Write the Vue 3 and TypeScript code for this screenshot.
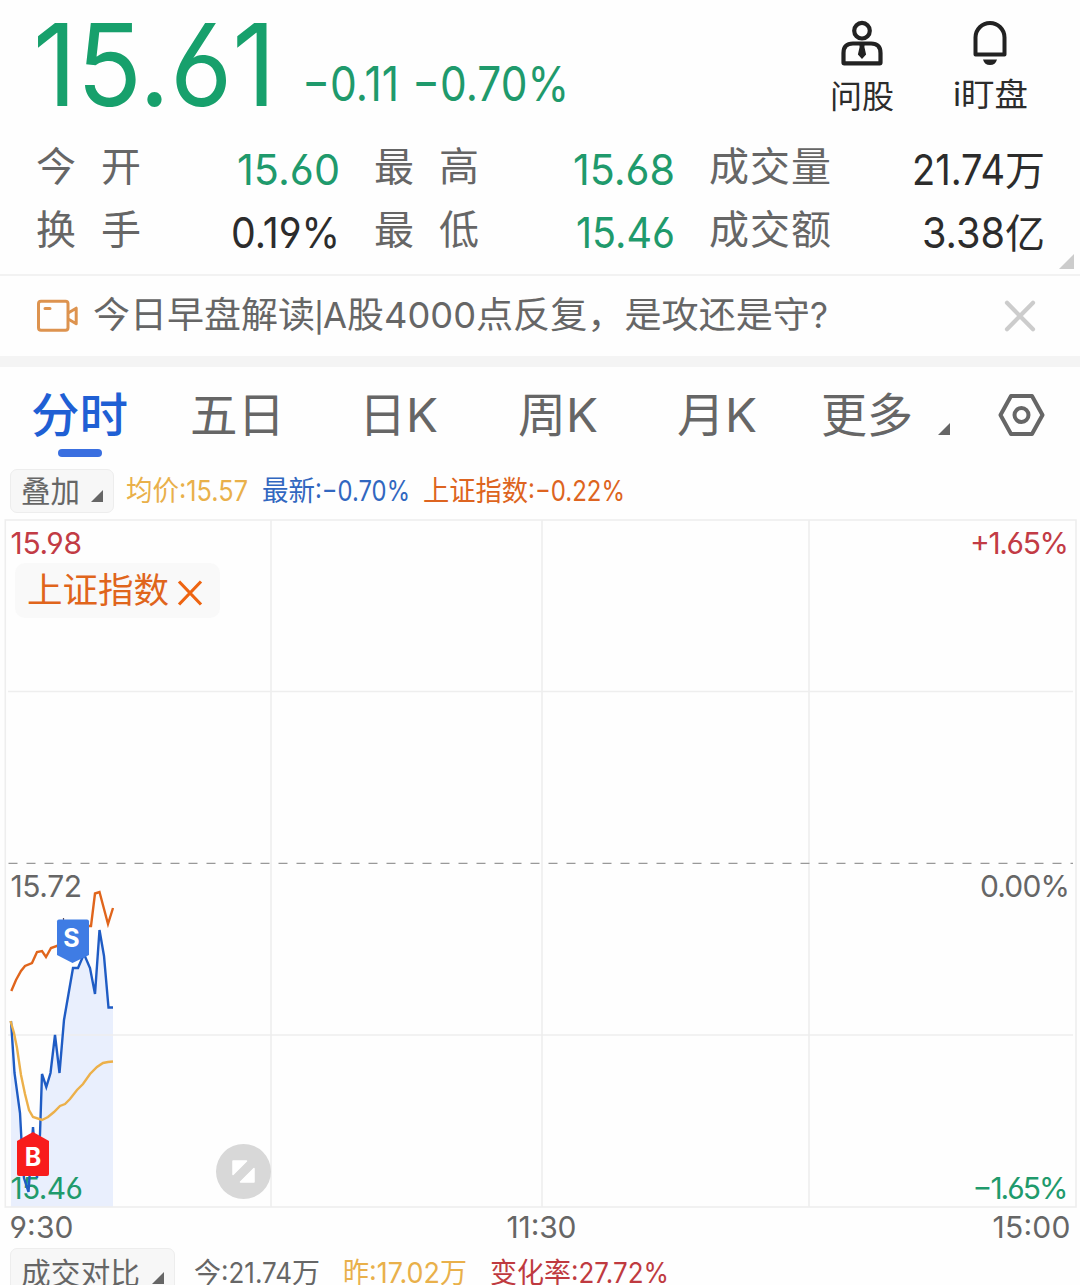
<script setup lang="ts">
interface Stat {
  label: string
  wide?: boolean
  value: string
  width: number
  unit?: string
  tone: 'down' | 'plain'
}

interface Run {
  text: string
  width: number
}

interface Point {
  x: number
  y: number
}

// Condenses a run of text horizontally so that it takes up the given width.
const vFit = {
  mounted(el: HTMLElement, binding: { value: number }) {
    const natural = el.getBoundingClientRect().width
    el.style.marginRight = `${binding.value - natural}px`
    el.style.transform = `scaleX(${binding.value / natural})`
  },
}

const stats: Stat[] = [
  { label: '今开', wide: true, value: '15.60', width: 103, tone: 'down' },
  { label: '最高', wide: true, value: '15.68', width: 102, tone: 'down' },
  { label: '成交量', value: '21.74', width: 93, unit: '万', tone: 'plain' },
  { label: '换手', wide: true, value: '0.19%', width: 109, tone: 'plain' },
  { label: '最低', wide: true, value: '15.46', width: 99, tone: 'down' },
  { label: '成交额', value: '3.38', width: 83, unit: '亿', tone: 'plain' },
]

const headline: Run[] = [
  { text: '今日早盘解读', width: 222 },
  { text: '|', width: 8 },
  { text: 'A', width: 24 },
  { text: '股', width: 37 },
  { text: '4000', width: 92 },
  { text: '点反复，是攻还是守', width: 334 },
  { text: '?', width: 18 },
]

const tabs: { runs: Run[]; left: number }[] = [
  { runs: [{ text: '五日', width: 95 }], left: 190 },
  { runs: [{ text: '日', width: 47 }, { text: 'K', width: 32 }], left: 359 },
  { runs: [{ text: '周', width: 48 }, { text: 'K', width: 32 }], left: 518 },
  { runs: [{ text: '月', width: 48 }, { text: 'K', width: 32 }], left: 677 },
  { runs: [{ text: '更多', width: 92 }], left: 821 },
]

const legend: { tone: string; runs: Run[] }[] = [
  { tone: 'average', runs: [{ text: '均价', width: 53 }, { text: ':15.57', width: 69 }] },
  { tone: 'latest', runs: [{ text: '最新', width: 53 }, { text: ':−0.70%', width: 95 }] },
  { tone: 'index', runs: [{ text: '上证指数', width: 105 }, { text: ':−0.22%', width: 97 }] },
]

const volume: { tone: string; runs: Run[] }[] = [
  { tone: 'today', runs: [{ text: '今', width: 27 }, { text: ':21.74', width: 71 }, { text: '万', width: 28 }] },
  { tone: 'average', runs: [{ text: '昨', width: 26 }, { text: ':17.02', width: 71 }, { text: '万', width: 27 }] },
  { tone: 'rise', runs: [{ text: '变化率', width: 81 }, { text: ':27.72%', width: 98 }] },
]

const parse = (s: string): Point[] =>
  s.split(' ').map((p) => {
    const [x, y] = p.split(',').map(Number)
    return { x, y }
  })
const toLine = (pts: Point[]) => pts.map((p) => `${p.x},${p.y}`).join(' ')

const price = parse(
  '11,1021 14.5,1073 20,1113 22,1150 24,1178 28.5,1192 30,1170 33,1127 37,1178 40,1134 42,1074 46.3,1087 50.5,1073 55,1035 59.5,1073 64,1020 73,968 78,968 84,954 90,968 95,994 99.5,930 104,956 108.5,1007.5 113,1007.5',
)
const average = parse(
  '10.5,1021 14,1033 17,1048 21,1075 25,1094 29,1110 33,1117 42,1120 48,1117 54,1112 60,1106 65,1104 70,1099 77,1090 83,1084 90,1074 97,1067 103,1063 108,1062 113,1061.5',
)
const index = parse(
  '11.3,991 16,980 21,971 25,966 32,963 37,952 42,951 46,957 51,948 57,946 64,938 70,932 88,926 91,926 95,893.5 99.5,892 108,924 113,908',
)
const area = `11,1207 ${toLine(price)} 113,1207`
</script>

<template>
  <main class="page">
    <header class="quote">
      <div class="last"><span v-fit="243">15.61</span></div>
      <div class="change">
        <span v-fit="97">−0.11</span>
        <span v-fit="157">−0.70%</span>
      </div>
      <button class="action ask">
        <svg width="46" height="50" viewBox="839 18 46 50" fill="none" stroke="#222" stroke-width="4.200">
          <circle cx="862" cy="30.700" r="7.800" />
          <path d="M843.500 62.500V53q0-9.500 9.500-9.500h18q9.500 0 9.500 9.500v9.500q0 .8-.8.8h-35.400q-.8 0-.8-.8Z" stroke-linejoin="round" />
          <path d="M859.300 44h5.400l-.3 3 1.700 7.500-4.100 4.500-4.100-4.500 1.700-7.500Z" fill="#222" stroke="none" />
        </svg>
        <span v-fit="64">问股</span>
      </button>
      <button class="action watch">
        <svg width="46" height="50" viewBox="968.500 18 46 50" fill="none" stroke="#222" stroke-width="4">
          <path d="M977 54.500V37.500a14.500 14.500 0 0 1 29 0v17Z" stroke-linejoin="round" />
          <path d="M984.500 59.500h14q-1.500 5.500-7 5.500t-7-5.500Z" fill="#222" stroke="none" />
        </svg>
        <span v-fit="75">i盯盘</span>
      </button>
    </header>

    <section class="stats">
      <div v-for="s in stats" :key="s.label" class="stat">
        <span class="label" :class="{ wide: s.wide }">{{ s.label }}</span>
        <span class="value" :class="s.tone">
          <span v-fit="s.width">{{ s.value }}</span><span v-if="s.unit" class="unit">{{ s.unit }}</span>
        </span>
      </div>
      <i class="corner"></i>
    </section>

    <section class="news">
      <svg width="44" height="34" viewBox="36 299 44 34" fill="none" stroke="#dd934f" stroke-width="3" stroke-linejoin="round" stroke-linecap="round">
        <rect x="38.500" y="301.300" width="29.500" height="29" rx="2.500" />
        <path d="M45 308.500h5M69 312.500l7.200-4.300v15.500l-7.200-4.200" />
      </svg>
      <p><span v-for="r in headline" :key="r.text" v-fit="r.width" :class="{ bar: r.text === '|' }">{{ r.text }}</span></p>
      <svg class="close" width="34" height="34" viewBox="-17 -17 34 34" stroke="#ccc" stroke-width="4.200" stroke-linecap="round">
        <path d="M-13-13.200L13 13.200M13-13.200L-13 13.200" />
      </svg>
    </section>

    <nav class="tabs">
      <a class="tab active"><span v-fit="97">分时</span></a>
      <a v-for="t in tabs" :key="t.left" class="tab">
        <span v-for="r in t.runs" :key="r.text" v-fit="r.width">{{ r.text }}</span>
      </a>
      <i class="tri"></i>
      <svg width="48" height="44" viewBox="998 393 48 44" fill="none" stroke="#666" stroke-width="4">
        <path d="M1011 396h21l10.500 19-10.500 19h-21l-10.500-19Z" stroke-linejoin="round" />
        <circle cx="1021.500" cy="415" r="7" />
      </svg>
    </nav>

    <section class="legend">
      <button class="chip"><span v-fit="59">叠加</span><i class="tri"></i></button>
      <span v-for="l in legend" :key="l.tone" class="item" :class="l.tone">
        <span v-for="r in l.runs" :key="r.text" v-fit="r.width">{{ r.text }}</span>
      </span>
    </section>

    <section class="chart">
      <svg width="1080" height="732" viewBox="0 516 1080 732">
        <polygon :points="area" fill="#e9effd" />
        <g class="grid">
          <rect x="5.300" y="520" width="1070.700" height="687" />
          <path d="M271 520V1207M542 520V1207M809 520V1207M8 691.500H1073M8 1035H1073" />
        </g>
        <path d="M8.500 863.300H1073" stroke="#999" stroke-width="1.200" stroke-dasharray="9 9" />

        <g class="axis">
          <text x="10.500" y="554" textLength="71.500" class="up">15.98</text>
          <text x="970" y="554" textLength="99" class="up">+1.65%</text>
          <text x="10.500" y="897" textLength="71.500">15.72</text>
          <text x="980" y="897" textLength="90">0.00%</text>
          <text x="10.500" y="1199" textLength="72.500" class="down">15.46</text>
          <text x="972.500" y="1199" textLength="96" class="down">−1.65%</text>
          <text x="9.500" y="1238" textLength="64">9:30</text>
          <text x="506.500" y="1238" textLength="70">11:30</text>
          <text x="992.500" y="1238" textLength="78">15:00</text>
        </g>

        <g fill="none" stroke-width="2.400" stroke-linejoin="miter">
          <polyline :points="toLine(index)" stroke="#e0651c" />
          <polyline :points="toLine(price)" stroke="#1f5cc4" />
          <polyline :points="toLine(average)" stroke="#ecb04a" />
        </g>

        <path d="M63.500 918v3" stroke="#5a4a5a" stroke-width="1.200" />
        <path d="M59 919.500h28q2 0 2 2V955l-16.500 8L57 955v-33.500q0-2 2-2Z" fill="#3f7ce4" />
        <text x="71.500" y="947" class="mark">S</text>
        <path d="M33 1132l16 9v33q0 2-2 2H19q-2 0-2-2v-33Z" fill="#f81c1c" />
        <text x="33" y="1166" class="mark">B</text>

        <circle cx="243.500" cy="1171.500" r="27.500" fill="#d8d8d8" />
        <path d="M233 1161h13.500L233 1174.500ZM254 1168.500v13.500H240.500Z" fill="#fff" stroke="#fff" stroke-width="1.500" stroke-linejoin="round" />
      </svg>
      <div class="overlay">
        <span v-fit="142">上证指数</span>
        <svg width="26" height="26" viewBox="-13 -13 26 26" stroke="#ee6411" stroke-width="3.200">
          <path d="M-11-11.500L11 11.500M11-11.500L-11 11.500" />
        </svg>
      </div>
    </section>

    <section class="volume">
      <button class="chip"><span v-fit="119">成交对比</span><i class="tri"></i></button>
      <span v-for="l in volume" :key="l.tone" class="item" :class="l.tone">
        <span v-for="r in l.runs" :key="r.text" v-fit="r.width">{{ r.text }}</span>
      </span>
    </section>
  </main>
</template>

<style>
body {
  margin: 0;
  background: #fff;
}
</style>

<style scoped>
.page {
  width: 1080px;
  height: 1285px;
  overflow: hidden;
  background: #fefefe;
  color: #666;
  font-family: Inter, 'Noto Sans CJK SC', sans-serif;
  font-feature-settings: 'cv03', 'cv04';
}
.page span {
  display: inline-block;
  flex: none;
  white-space: nowrap;
  transform-origin: 0 50%;
}
button {
  margin: 0;
  padding: 0;
  border: 0;
  background: none;
  color: inherit;
  font: inherit;
  font-feature-settings: inherit;
}
svg {
  display: block;
  flex: none;
  overflow: visible;
}
.quote {
  display: flex;
  align-items: flex-start;
  height: 138px;
  color: #17a06c;
}
.last {
  flex: none;
  width: 269px;
  margin-left: 33px;
  font-size: 114px;
  line-height: 130px;
}
.change {
  display: flex;
  flex: none;
  gap: 13px;
  width: 513px;
  font-size: 48px;
  line-height: 168px;
  color: #1f9a6c;
}
.action {
  display: flex;
  flex-direction: column;
  align-items: flex-start;
  flex: none;
  width: 94px;
  padding: 18px 0 0 15px;
  color: #2c2c2c;
  font-size: 32px;
  line-height: 58px;
}
.action svg {
  margin-left: 9px;
}
.watch {
  width: 130px;
  margin-left: 29px;
  line-height: 53px;
}
.action.watch {
  padding-left: 15px;
}
.watch svg {
  margin-left: 14px;
}
.stats {
  position: relative;
  display: grid;
  grid-template-columns: 304px 301px 336px;
  grid-auto-rows: 63px;
  column-gap: 34px;
  height: 138px;
  padding-left: 36px;
  border-bottom: 2px solid #f2f2f2;
  box-sizing: border-box;
}
.stat {
  display: flex;
  justify-content: space-between;
  align-items: flex-start;
}
.label {
  font-size: 40px;
  line-height: 57px;
  letter-spacing: 1px;
}
.label.wide {
  letter-spacing: 25px;
}
.value {
  font-size: 42.500px;
  line-height: 63px;
  color: #2c2c2c;
}
.value.down {
  color: #1f9a6c;
}
.unit {
  font-size: 40px;
}
.corner {
  position: absolute;
  right: 6px;
  bottom: 5px;
  width: 15px;
  height: 15px;
  background: #ccc;
  clip-path: polygon(100% 0, 100% 100%, 0 100%);
}
.news {
  display: flex;
  align-items: center;
  height: 80px;
  padding-left: 36px;
  border-bottom: 11px solid #f4f4f4;
}
.news p {
  display: flex;
  align-items: baseline;
  width: 910px;
  margin: 0 0 0 13px;
  font-size: 36px;
  line-height: 81px;
}
.news .bar {
  font-size: 29px;
  font-weight: 600;
}
.tabs {
  display: grid;
  grid-template-columns: 157px 169px 159px 159px 144px 117px 60px 48px;
  align-items: center;
  height: 96px;
  padding-left: 33px;
  font-size: 47px;
  line-height: 96px;
}
.tab {
  position: relative;
  display: flex;
  white-space: nowrap;
}
.active {
  margin-left: -2px;
  color: #1f5fd4;
  font-weight: 500;
}
.active::after {
  content: '';
  position: absolute;
  left: 27px;
  bottom: 6px;
  width: 44px;
  height: 8px;
  border-radius: 4px;
  background: #3a6fe0;
}
.tri {
  flex: none;
  width: 12px;
  height: 12px;
  background: #666;
  clip-path: polygon(100% 0, 100% 100%, 0 100%);
}
.tabs .tri {
  margin-top: 28px;
}
.legend,
.volume {
  display: flex;
  align-items: center;
  height: 50px;
  padding-left: 10px;
  font-size: 28px;
  line-height: 44px;
}
.chip {
  display: flex;
  align-items: center;
  justify-content: space-between;
  flex: none;
  box-sizing: border-box;
  width: 104px;
  height: 44px;
  margin-right: 12px;
  padding: 0 10px;
  border: 1px solid #ededed;
  border-radius: 7px;
  background: #f7f7f7;
  font-size: 30px;
}
.chip .tri {
  margin-top: 10px;
}
.legend {
  align-items: flex-start;
  padding-top: 6px;
  height: 47px;
}
.item {
  margin-right: 14px;
}
.legend .item {
  line-height: 45px;
}
.average {
  color: #e9b04a;
}
.latest {
  color: #3167c0;
  margin-right: 13px;
}
.index {
  color: #dd6420;
}
.chart {
  position: relative;
  height: 732px;
}
.grid {
  fill: none;
  stroke: #eee;
  stroke-width: 1.600;
}
.axis text {
  fill: #666;
  font-size: 30px;
}
.axis .up {
  fill: #c23b45;
}
.axis .down {
  fill: #1f9a6c;
}
.mark {
  fill: #fff;
  font-size: 25px;
  font-weight: 700;
  text-anchor: middle;
}
.overlay {
  position: absolute;
  top: 47px;
  left: 15px;
  display: flex;
  align-items: center;
  gap: 8px;
  box-sizing: border-box;
  width: 205px;
  height: 55px;
  padding-left: 12px;
  border-radius: 10px;
  background: #f9f9f9;
  color: #e0651c;
  font-size: 35px;
  line-height: 57px;
}
.overlay svg {
  margin-top: 5px;
}
.volume .chip {
  width: 165px;
  height: 50px;
  margin-right: 19px;
}
.volume .item {
  margin-right: 23px;
}
.today {
  color: #666;
}
.rise {
  color: #bf3a40;
}
</style>
